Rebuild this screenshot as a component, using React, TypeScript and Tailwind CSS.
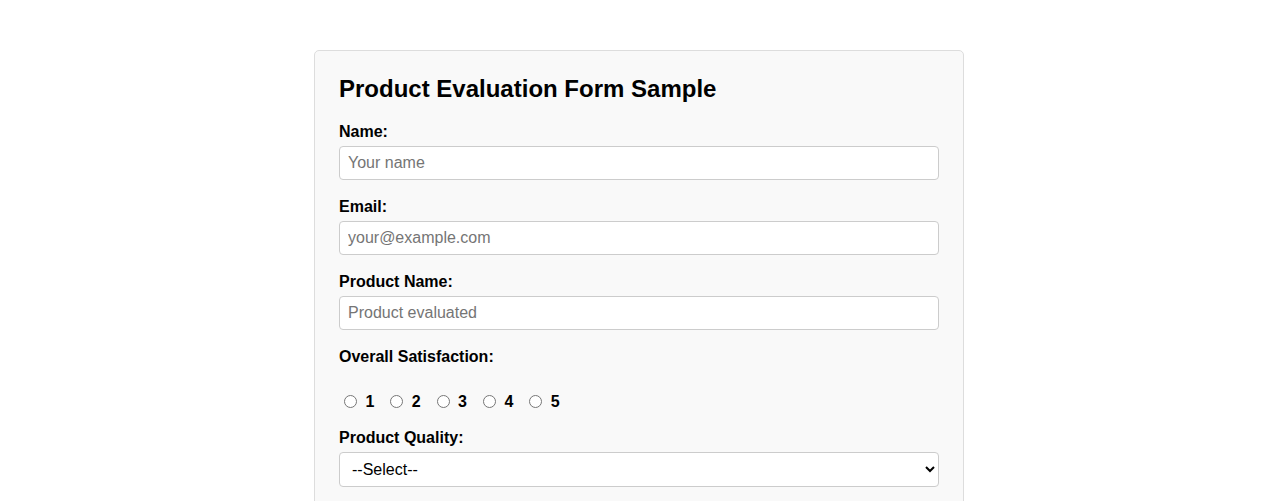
import React from 'react';

const font = { fontFamily: '"Liberation Sans", Arial, sans-serif' };

interface FieldProps {
  label: string;
  placeholder: string;
  type?: string;
}

const Field: React.FC<FieldProps> = ({ label, placeholder, type = 'text' }) => (
  <div className="mb-4">
    <label className="block font-bold text-[16px] leading-[19px] pt-[1px] mb-[5px] text-black">{label}</label>
    <input
      type={type}
      placeholder={placeholder}
      className="block w-full h-[34px] px-2 bg-white border border-[#ccc] rounded-[4px] text-[16px] placeholder:text-[#757575] outline-none"
    />
  </div>
);

export default function App() {
  return (
    <div className="min-h-screen bg-white pt-[50px]" style={font}>
      <div className="mx-auto w-[650px] bg-[#f9f9f9] border border-[#ddd] rounded-[5px] p-6 pb-10">
        <h2 className="text-[24px] leading-[28px] font-bold text-black mb-[18px]">Product Evaluation Form Sample</h2>
        <Field label="Name:" placeholder="Your name" />
        <Field label="Email:" placeholder="your@example.com" type="email" />
        <Field label="Product Name:" placeholder="Product evaluated" />
        <label className="block font-bold text-[16px] leading-[19px] pt-[1px] text-black">Overall Satisfaction:</label>
        <div className="flex items-center mt-[26px] mb-[16px] h-[19px]">
          {[1, 2, 3, 4, 5].map((n) => (
            <label key={n} className="flex items-center mr-[10.9px] font-bold text-[16px] leading-[19px] text-black">
              <input type="radio" name="satisfaction" value={n} className="ml-[5px] mr-[8.5px] w-[13px] h-[13px]" />
              {n}
            </label>
          ))}
        </div>
        <label className="block font-bold text-[16px] leading-[19px] pt-[1px] mb-[5px] text-black">Product Quality:</label>
        <select className="block w-full h-[35px] px-2 bg-white border border-[#ccc] rounded-[4px] text-[16px] text-black">
          <option>--Select--</option>
          <option>Excellent</option>
          <option>Good</option>
          <option>Fair</option>
          <option>Poor</option>
        </select>
      </div>
    </div>
  );
}
